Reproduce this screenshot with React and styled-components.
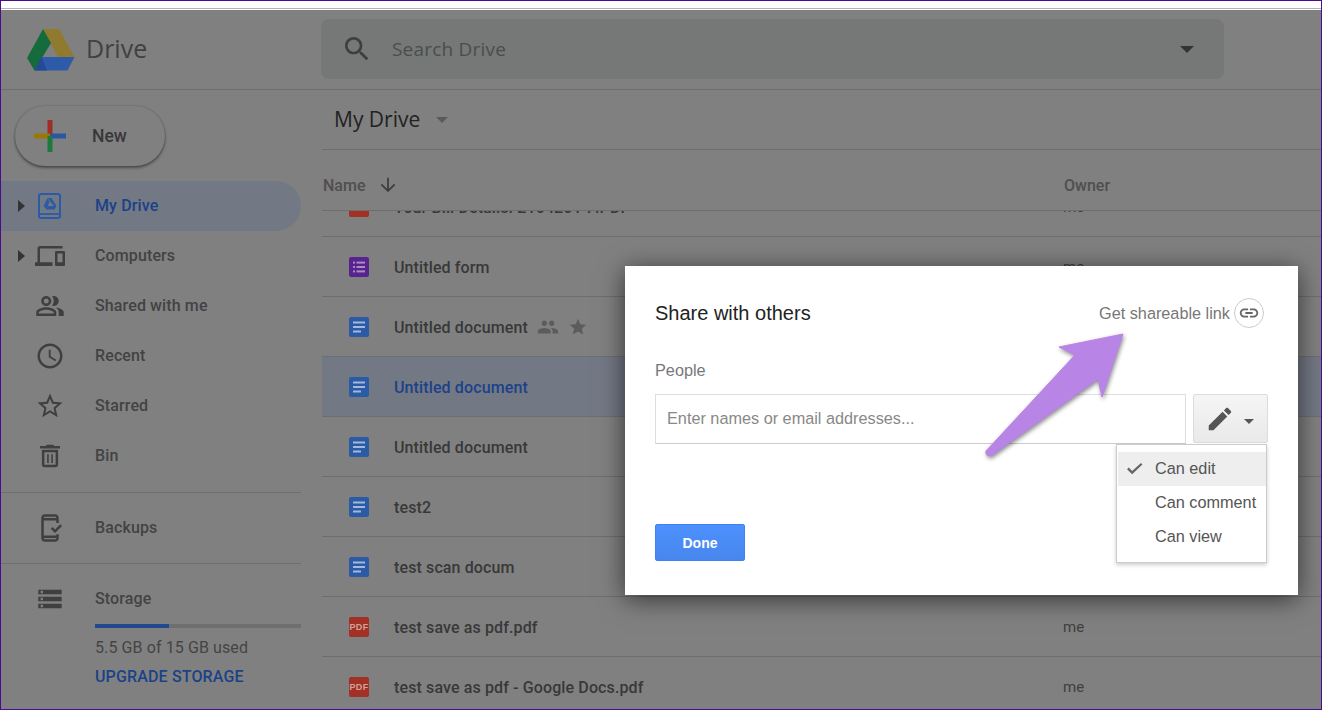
import styled, { createGlobalStyle } from "styled-components";

const GlobalStyle = createGlobalStyle`
  html, body {
    margin: 0;
    padding: 0;
    background: #808080;
  }
  * {
    box-sizing: border-box;
  }
`;

const ICONS = {
  search:
    "M15.5 14h-.79l-.28-.27C15.41 12.59 16 11.11 16 9.5 16 5.91 13.09 3 9.5 3S3 5.91 3 9.5 5.91 16 9.5 16c1.61 0 3.09-.59 4.23-1.57l.27.28v.79l5 4.99L20.49 19l-4.99-5zm-6 0C7.01 14 5 11.99 5 9.5S7.01 5 9.5 5 14 7.01 14 9.5 11.99 14 9.5 14z",
  devices:
    "M4 6h18V4H4c-1.1 0-2 .9-2 2v11H0v3h14v-3H4V6zm19 2h-6c-.55 0-1 .45-1 1v10c0 .55.45 1 1 1h6c.55 0 1-.45 1-1V9c0-.55-.45-1-1-1zm-1 9h-4v-7h4v7z",
  group:
    "M15 8c0-1.42-.5-2.73-1.33-3.76.42-.14.86-.24 1.33-.24 2.21 0 4 1.79 4 4s-1.79 4-4 4c-.43 0-.84-.09-1.23-.21-.03-.01-.06-.02-.1-.03A5.98 5.98 0 0 0 15 8zm1.66 5.13C18.03 14.06 19 15.32 19 17v3h4v-3c0-2.18-3.58-3.47-6.34-3.87zM9 6c-1.1 0-2 .9-2 2s.9 2 2 2 2-.9 2-2-.9-2-2-2m0 9c-2.7 0-5.8 1.29-6 2.01V18h12v-1c-.2-.71-3.3-2-6-2M9 4c2.21 0 4 1.79 4 4s-1.79 4-4 4-4-1.79-4-4 1.79-4 4-4zm0 9c2.67 0 8 1.34 8 4v3H1v-3c0-2.66 5.33-4 8-4z",
  clock:
    "M11.99 2C6.47 2 2 6.48 2 12s4.47 10 9.99 10C17.52 22 22 17.52 22 12S17.52 2 11.99 2zM12 20c-4.42 0-8-3.58-8-8s3.58-8 8-8 8 3.58 8 8-3.58 8-8 8zm.5-13H11v6l5.25 3.15.75-1.23-4.5-2.67z",
  starOutline:
    "M22 9.24l-7.19-.62L12 2 9.19 8.63 2 9.24l5.46 4.73L5.82 21 12 17.27 18.18 21l-1.63-7.03L22 9.24zM12 15.4l-3.76 2.27 1-4.28-3.32-2.88 4.38-.38L12 6.1l1.71 4.04 4.38.38-3.32 2.88 1 4.28L12 15.4z",
  bin: "M5.5 19c0 1.1.9 2 2 2h9c1.1 0 2-.9 2-2V7h-13v12zM7.5 9h9v10h-9V9zm8-5l-1-1h-5l-1 1H4v2h16V4zM9.7 10.5H11v7H9.7zM13 10.5h1.3v7H13z",
  backup:
    "M16 1H8C6.3 1 5 2.3 5 4v16c0 1.7 1.3 3 3 3h8c1.7 0 3-1.3 3-3v-3h-2v1H7V6h10v2h2V4c0-1.7-1.3-3-3-3zM7 4c0-.6.4-1 1-1h8c.6 0 1 .4 1 1H7zm10 16v.1c0 .5-.4.9-1 .9H8c-.6 0-1-.4-1-1h10zm4.6-9.6L16 16l-3.4-3.4 1.4-1.4 2 2 4.2-4.2 1.4 1.4z",
  storage:
    "M2 20h20v-4H2v4zm2-3h2v2H4v-2zM2 4v4h20V4H2zm4 3H4V5h2v2zm-4 7h20v-4H2v4zm2-3h2v2H4v-2z",
  people:
    "M16 11c1.66 0 2.99-1.34 2.99-3S17.66 5 16 5c-1.66 0-3 1.34-3 3s1.34 3 3 3zm-8 0c1.66 0 2.99-1.34 2.99-3S9.66 5 8 5C6.34 5 5 6.34 5 8s1.34 3 3 3zm0 2c-2.33 0-7 1.17-7 3.5V19h14v-2.5c0-2.33-4.67-3.5-7-3.5zm8 0c-.29 0-.62.02-.97.05 1.16.84 1.97 1.97 1.97 3.45V19h6v-2.5c0-2.33-4.67-3.5-7-3.5z",
  star: "M12 17.27L18.18 21l-1.64-7.03L22 9.24l-7.19-.61L12 2 9.19 8.63 2 9.24l5.46 4.73L5.82 21z",
  arrowDown: "M20 12l-1.41-1.41L13 16.17V4h-2v12.17l-5.58-5.59L4 12l8 8 8-8z",
  link: "M3.9 12c0-1.71 1.39-3.1 3.1-3.1h4V7H7c-2.76 0-5 2.24-5 5s2.24 5 5 5h4v-1.9H7c-1.71 0-3.1-1.39-3.1-3.1zM8 13h8v-2H8v2zm9-6h-4v1.9h4c1.71 0 3.1 1.39 3.1 3.1s-1.39 3.1-3.1 3.1h-4V17h4c2.76 0 5-2.24 5-5s-2.24-5-5-5z",
  edit: "M3 17.25V21h3.75L17.81 9.94l-3.75-3.75L3 17.25zM20.71 7.04c.39-.39.39-1.02 0-1.41l-2.34-2.34c-.39-.39-1.02-.39-1.41 0l-1.83 1.83 3.75 3.75 1.83-1.83z",
  check: "M9 19.4L2.6 13l2.2-2.2L9 15 20.2 5.2 22 7z",
};

const Icon = ({ name, size = 24, color = "#3f3f3f" }) => (
  <svg width={size} height={size} viewBox="0 0 24 24" fill={color}>
    <path d={ICONS[name]} />
  </svg>
);

const DriveLogo = () => (
  <svg width="48" height="42" viewBox="27 28 48 42">
    <polygon points="43,28 59,28 74.5,56 58,56" fill="#8f7a30" />
    <polygon points="43,28 27,57 34.5,69.5 51,42" fill="#156b3c" />
    <polygon points="41.5,56 74.5,56 67.5,69.5 34.5,69.5" fill="#2d5ba8" />
    <polygon points="41.5,56 47,69.5 34.5,69.5" fill="#234a92" />
  </svg>
);

const PlusLogo = () => (
  <svg width="32" height="32" viewBox="0 0 32 32">
    <rect x="13.5" y="0" width="5" height="16" fill="#a02e24" />
    <rect x="0" y="13.5" width="16" height="5" fill="#9b7806" />
    <rect x="16" y="13.5" width="16" height="5" fill="#2a56a4" />
    <rect x="13.5" y="16" width="5" height="16" fill="#1d7a3c" />
  </svg>
);

const MyDriveIcon = () => (
  <svg width="24" height="26" viewBox="0 0 24 26">
    <rect x="1" y="1" width="21" height="24" rx="2" fill="none" stroke="#2c5ba6" strokeWidth="2" />
    <line x1="1" y1="21" x2="22" y2="21" stroke="#2c5ba6" strokeWidth="1.8" />
    <polygon points="9.5,5 13.5,5 18.5,13 15.8,13" fill="#2c5ba6" />
    <polygon points="9.5,5 11.5,9 8.5,16 5.5,13" fill="#2c5ba6" />
    <polygon points="9.5,13 18.5,13 16.5,16.5 7.5,16.5" fill="#2c5ba6" />
  </svg>
);

const FileIcon = ({ kind }) => {
  if (kind === "pdf") {
    return <PdfBadge>PDF</PdfBadge>;
  }
  if (kind === "form") {
    return (
      <svg width="20" height="20" viewBox="0 0 20 20">
        <rect width="20" height="20" rx="2" fill="#59238f" />
        <g fill="#a98cc4">
          <rect x="4" y="4.6" width="2" height="2" />
          <rect x="7.5" y="4.6" width="8.5" height="2" />
          <rect x="4" y="9" width="2" height="2" />
          <rect x="7.5" y="9" width="8.5" height="2" />
          <rect x="4" y="13.4" width="2" height="2" />
          <rect x="7.5" y="13.4" width="8.5" height="2" />
        </g>
      </svg>
    );
  }
  return (
    <svg width="20" height="20" viewBox="0 0 20 20">
      <rect width="20" height="20" rx="2" fill="#2c5ba6" />
      <g fill="#a3b8da">
        <rect x="4" y="4.5" width="12" height="2" />
        <rect x="4" y="9" width="12" height="2" />
        <rect x="4" y="13.5" width="8" height="2" />
      </g>
    </svg>
  );
};

const NAV_TOP = [
  { label: "My Drive", active: true, caret: true },
  { label: "Computers", icon: "devices", caret: true },
  { label: "Shared with me", icon: "group" },
  { label: "Recent", icon: "clock" },
  { label: "Starred", icon: "starOutline" },
  { label: "Bin", icon: "bin" },
];

const FILES = [
  { name: "Your Bill Details. 2104201 7.PDF", kind: "pdf" },
  { name: "Untitled form", kind: "form" },
  { name: "Untitled document", kind: "doc", shared: true },
  { name: "Untitled document", kind: "doc", selected: true },
  { name: "Untitled document", kind: "doc" },
  { name: "test2", kind: "doc" },
  { name: "test scan docum", kind: "doc" },
  { name: "test save as pdf.pdf", kind: "pdf" },
  { name: "test save as pdf - Google Docs.pdf", kind: "pdf" },
];

const ACCESS = ["Can edit", "Can comment", "Can view"];

export default function App() {
  return (
    <Frame>
      <GlobalStyle />
      <TopStrip>
        <StripLine />
      </TopStrip>

      <Header>
        <Brand>
          <DriveLogo />
          <BrandName>Drive</BrandName>
        </Brand>
        <SearchBox>
          <Icon name="search" size={32} color="#3d3f3e" />
          <SearchText>Search Drive</SearchText>
          <SearchCaret />
        </SearchBox>
      </Header>

      <Body>
        <Sidebar>
          <NewButton>
            <PlusLogo />
            <NewLabel>New</NewLabel>
          </NewButton>

          <NavList>
            {NAV_TOP.map((item) => (
              <NavRow key={item.label} $active={item.active}>
                <NavCaret $show={item.caret} />
                <NavIcon>
                  {item.icon ? <Icon name={item.icon} size={30} /> : <MyDriveIcon />}
                </NavIcon>
                <NavLabel $active={item.active}>{item.label}</NavLabel>
              </NavRow>
            ))}
          </NavList>

          <BackupSection>
            <NavRow>
              <NavCaret />
              <NavIcon>
                <Icon name="backup" size={30} />
              </NavIcon>
              <NavLabel>Backups</NavLabel>
            </NavRow>
          </BackupSection>

          <StorageSection>
            <StorageHead>
              <NavCaret />
              <NavIcon>
                <Icon name="storage" size={28} />
              </NavIcon>
              <NavLabel>Storage</NavLabel>
            </StorageHead>
            <StorageBar>
              <StorageFill style={{ width: "36%" }} />
            </StorageBar>
            <StorageUsed>5.5 GB of 15 GB used</StorageUsed>
            <Upgrade>UPGRADE STORAGE</Upgrade>
          </StorageSection>
        </Sidebar>

        <Main>
          <Toolbar>
            <FolderTitle>My Drive</FolderTitle>
            <FolderCaret />
          </Toolbar>
          <ColumnHead>
            <NameHead>
              Name
              <Icon name="arrowDown" size={22} color="#3f3f3f" />
            </NameHead>
            <OwnerHead>Owner</OwnerHead>
          </ColumnHead>
          <FileList>
            {FILES.map((file, i) => (
              <FileRow key={i} $first={i === 0} $selected={file.selected}>
                <FileName>
                  <FileIcon kind={file.kind} />
                  <FileLabel $selected={file.selected}>{file.name}</FileLabel>
                  {file.shared && (
                    <FileBadges>
                      <Icon name="people" size={22} color="#5c5c5c" />
                      <Icon name="star" size={20} color="#5c5c5c" />
                    </FileBadges>
                  )}
                </FileName>
                <FileOwner>me</FileOwner>
              </FileRow>
            ))}
          </FileList>
        </Main>
      </Body>

      <Dialog>
        <DialogHead>
          <DialogTitle>Share with others</DialogTitle>
          <ShareLink>
            <ShareText>Get shareable link</ShareText>
            <LinkCircle>
              <Icon name="link" size={22} color="#666" />
            </LinkCircle>
          </ShareLink>
        </DialogHead>
        <PeopleLabel>People</PeopleLabel>
        <PeopleRow>
          <PeopleInput placeholder="Enter names or email addresses..." />
          <PermButton>
            <Icon name="edit" size={30} color="#555" />
            <PermCaret />
          </PermButton>
        </PeopleRow>
        <DoneButton>Done</DoneButton>

        <PermMenu>
          {ACCESS.map((item, i) => (
            <PermItem key={item} $active={i === 0}>
              <CheckSlot>{i === 0 && <Icon name="check" size={19} color="#666" />}</CheckSlot>
              {item}
            </PermItem>
          ))}
        </PermMenu>

        <Callout width="150" height="134" viewBox="980 330 150 134">
          <path
            d="M1123 334 L1059 347 L1075 355 L986 451 Q985 456 991 456 L1098 379 L1102 397 Z"
            fill="#b884e6"
            stroke="#b884e6"
            strokeLinejoin="round"
          />
        </Callout>
      </Dialog>
    </Frame>
  );
}

const Frame = styled.div`
  position: relative;
  width: 1322px;
  height: 710px;
  display: flex;
  flex-direction: column;
  overflow: hidden;
  border: 1px solid #4a0d8e;
  background: #808080;
  font-family: Roboto, "Liberation Sans", sans-serif;
`;

const TopStrip = styled.div`
  flex: none;
  padding: 7px 0 1px;
  background: #fff;
`;

const StripLine = styled.div`
  height: 1px;
  background: #b4b4b4;
`;

const Header = styled.header`
  flex: none;
  height: 80px;
  display: flex;
  align-items: center;
  border-bottom: 1px solid #6e6e6e;
`;

const Brand = styled.div`
  width: 320px;
  display: flex;
  align-items: center;
  gap: 11px;
  padding-left: 26px;
`;

const BrandName = styled.span`
  margin-top: -3px;
  font-family: "Open Sans", sans-serif;
  font-size: 25px;
  color: #414141;
`;

const SearchBox = styled.div`
  width: 903px;
  height: 60px;
  margin-bottom: 1px;
  display: flex;
  align-items: center;
  padding: 0 20px;
  border-radius: 8px;
  background: #757876;
`;

const SearchText = styled.span`
  flex: 1;
  margin-left: 19px;
  font-family: "Open Sans", sans-serif;
  font-size: 19px;
  letter-spacing: 0.2px;
  color: #4a4d4d;
`;

const SearchCaret = styled.span`
  width: 0;
  height: 0;
  margin-right: 10px;
  border-left: 7px solid transparent;
  border-right: 7px solid transparent;
  border-top: 7px solid #333;
`;

const Body = styled.div`
  flex: 1;
  min-height: 0;
  display: flex;
`;

const Sidebar = styled.aside`
  flex: none;
  width: 321px;
  padding-top: 16px;
`;

const NewButton = styled.div`
  width: 150px;
  height: 60px;
  margin-left: 14px;
  display: flex;
  align-items: center;
  padding-left: 19px;
  border-radius: 30px;
  background: #808080;
  box-shadow: 0 2px 3px rgba(0, 0, 0, 0.4), 0 0 2px rgba(0, 0, 0, 0.25);
`;

const NewLabel = styled.span`
  margin-left: 26px;
  font-size: 17.5px;
  font-weight: 500;
  color: #383838;
`;

const NavList = styled.nav`
  margin-top: 15px;
  padding-bottom: 11px;
  border-bottom: 1px solid #6e6e6e;
  width: 300px;
`;

const NavRow = styled.div`
  width: 300px;
  height: 50px;
  display: flex;
  align-items: center;
  padding-left: 17px;
  border-radius: 0 25px 25px 0;
  background: ${(p) => (p.$active ? "#737885" : "transparent")};
`;

const NavCaret = styled.span`
  flex: none;
  width: 0;
  height: 0;
  border-top: 6px solid transparent;
  border-bottom: 6px solid transparent;
  border-left: 7px solid ${(p) => (p.$show ? "#333" : "transparent")};
`;

const NavIcon = styled.span`
  flex: none;
  width: 40px;
  margin-left: 5px;
  display: flex;
  justify-content: center;
`;

const NavLabel = styled.span`
  margin-top: -1px;
  margin-left: 25px;
  font-size: 16px;
  font-weight: 500;
  letter-spacing: 0.12px;
  color: ${(p) => (p.$active ? "#1b4288" : "#434343")};
`;

const BackupSection = styled.div`
  width: 300px;
  padding: 10px 0 10px;
  border-bottom: 1px solid #6e6e6e;
`;

const StorageSection = styled.div`
  width: 300px;
  padding-top: 10px;
`;

const StorageHead = styled.div`
  height: 50px;
  display: flex;
  align-items: center;
  padding-left: 17px;
`;

const StorageBar = styled.div`
  height: 4px;
  margin-left: 94px;
  background: #6f6f6f;
`;

const StorageFill = styled.div`
  height: 100%;
  background: #21498f;
`;

const StorageUsed = styled.div`
  margin: 10px 0 0 94px;
  font-size: 16px;
  letter-spacing: 0.1px;
  color: #444;
`;

const Upgrade = styled.div`
  margin: 10px 0 0 94px;
  font-size: 16px;
  font-weight: 500;
  letter-spacing: 0.15px;
  color: #1b4288;
`;

const Main = styled.main`
  flex: 1;
  min-width: 0;
  display: flex;
  flex-direction: column;
`;

const Toolbar = styled.div`
  flex: none;
  height: 60px;
  display: flex;
  align-items: center;
  padding-left: 12px;
  border-bottom: 1px solid #6e6e6e;
`;

const FolderTitle = styled.span`
  margin-top: -2px;
  font-family: "Open Sans", sans-serif;
  font-size: 21px;
  color: #222;
`;

const FolderCaret = styled.span`
  width: 0;
  height: 0;
  margin-left: 16px;
  border-left: 6px solid transparent;
  border-right: 6px solid transparent;
  border-top: 6px solid #5a5a5a;
`;

const ColumnHead = styled.div`
  flex: none;
  height: 61px;
  display: flex;
  align-items: center;
  padding-top: 10px;
  border-bottom: 1px solid #6e6e6e;
`;

const NameHead = styled.div`
  width: 742px;
  padding-left: 1px;
  display: flex;
  align-items: center;
  gap: 12px;
  font-size: 16px;
  font-weight: 500;
  color: #4f4f4f;
`;

const OwnerHead = styled.div`
  font-size: 16px;
  font-weight: 500;
  color: #4f4f4f;
`;

const FileList = styled.div`
  flex: 1;
  min-height: 0;
  overflow: hidden;
`;

const FileRow = styled.div`
  height: 60px;
  margin-top: ${(p) => (p.$first ? "-34px" : "0")};
  display: flex;
  align-items: center;
  padding: 1px 0 0 27px;
  border-bottom: 1px solid #6e6e6e;
  background: ${(p) => (p.$selected ? "#737885" : "transparent")};
`;

const FileName = styled.div`
  width: 714px;
  display: flex;
  align-items: center;
`;

const FileLabel = styled.span`
  margin-left: 25px;
  font-size: 16px;
  font-weight: 500;
  letter-spacing: 0.12px;
  color: ${(p) => (p.$selected ? "#1b4288" : "#383838")};
`;

const FileBadges = styled.span`
  display: flex;
  align-items: center;
  gap: 9px;
  margin-left: 9px;
`;

const FileOwner = styled.span`
  margin-top: -1px;
  font-size: 15px;
  color: #3f3f3f;
`;

const PdfBadge = styled.span`
  width: 20px;
  height: 20px;
  display: flex;
  align-items: center;
  justify-content: center;
  border-radius: 2px;
  background: #a33025;
  font-family: "Liberation Sans", sans-serif;
  font-size: 9px;
  font-weight: 700;
  letter-spacing: 0.3px;
  color: #cfa29c;
`;

const Dialog = styled.div`
  position: absolute;
  left: 624px;
  top: 265px;
  width: 673px;
  height: 329px;
  padding: 32px 30px 0;
  background: #fff;
  box-shadow: 0 4px 24px rgba(0, 0, 0, 0.6);
  font-family: "Liberation Sans", Arial, sans-serif;
`;

const DialogHead = styled.div`
  display: flex;
  align-items: center;
  justify-content: space-between;
  height: 30px;
  margin-right: 4px;
`;

const DialogTitle = styled.div`
  font-size: 20px;
  color: #222;
`;

const ShareLink = styled.div`
  display: flex;
  align-items: center;
  gap: 4px;
  font-size: 16.25px;
  color: #777;
`;

const ShareText = styled.span`
  margin-top: 1px;
`;

const LinkCircle = styled.span`
  width: 30px;
  height: 30px;
  display: flex;
  align-items: center;
  justify-content: center;
  border: 1px solid #ccc;
  border-radius: 50%;
`;

const PeopleLabel = styled.div`
  margin-top: 32px;
  height: 20px;
  line-height: 20px;
  font-size: 16.25px;
  color: #777;
`;

const PeopleRow = styled.div`
  display: flex;
  gap: 7px;
  margin-top: 14px;
  margin-right: -8px;
`;

const PeopleInput = styled.input`
  flex: none;
  width: 531px;
  height: 50px;
  padding: 0 11px 2px;
  border: 1px solid #ddd;
  border-bottom-color: #ccc;
  outline: none;
  font-family: inherit;
  font-size: 16.25px;
  &::placeholder {
    color: #888;
    opacity: 1;
  }
`;

const PermButton = styled.div`
  flex: none;
  width: 75px;
  height: 49px;
  display: flex;
  align-items: center;
  gap: 9px;
  padding-left: 11px;
  border: 1px solid #dcdcdc;
  border-radius: 2px;
  background: linear-gradient(#f5f5f5, #e9e9e9);
`;

const PermCaret = styled.span`
  width: 0;
  height: 0;
  margin-top: 5px;
  border-left: 5px solid transparent;
  border-right: 5px solid transparent;
  border-top: 5px solid #555;
`;

const DoneButton = styled.div`
  width: 90px;
  height: 37px;
  margin-top: 80px;
  display: flex;
  align-items: center;
  justify-content: center;
  border: 1px solid #3b82f6;
  border-radius: 2px;
  background: linear-gradient(#4d90fe, #4787ed);
  font-size: 14px;
  font-weight: 700;
  color: #fff;
`;

const PermMenu = styled.div`
  position: absolute;
  left: 491px;
  top: 178px;
  width: 151px;
  height: 119px;
  padding: 7px 0 0 1px;
  background: #fff;
  border: 1px solid #ccc;
  box-shadow: 0 2px 4px rgba(0, 0, 0, 0.2);
`;

const PermItem = styled.div`
  height: 34px;
  padding-bottom: 2px;
  display: flex;
  align-items: center;
  font-size: 16.25px;
  color: #555;
  background: ${(p) => (p.$active ? "#eee" : "transparent")};
`;

const CheckSlot = styled.span`
  flex: none;
  width: 37px;
  display: flex;
  padding-left: 7px;
`;

const Callout = styled.svg`
  position: absolute;
  left: 355px;
  top: 64px;
  overflow: visible;
  filter: drop-shadow(1px 2px 2px rgba(0, 0, 0, 0.45));
`;
